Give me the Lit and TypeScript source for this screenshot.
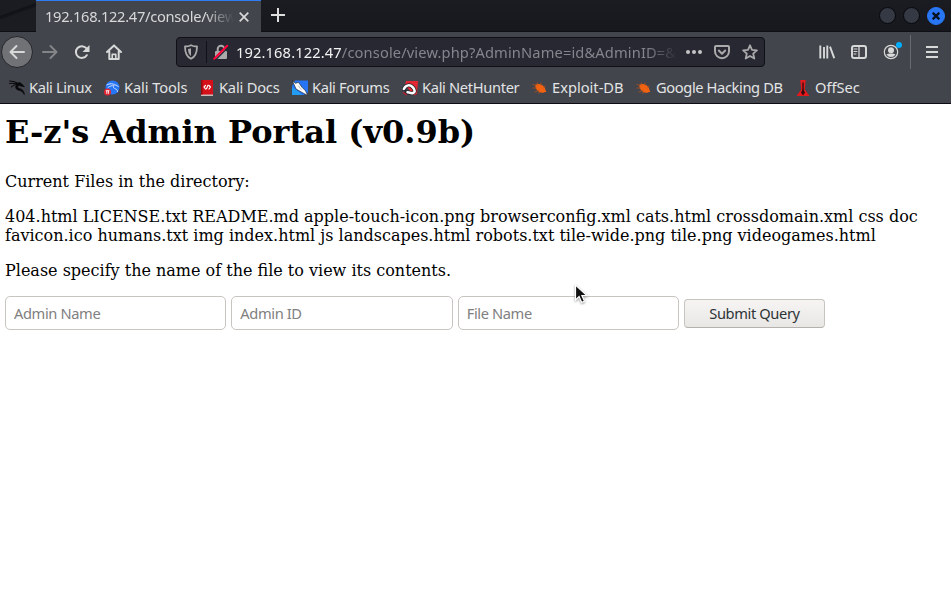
import { LitElement, html, css, svg, TemplateResult } from "lit";
import { customElement } from "lit/decorators.js";

const icon = (body: TemplateResult, size = 16) =>
  html`<svg width=${size} height=${size} viewBox="0 0 16 16" fill="none" stroke="currentColor" stroke-width="2" stroke-linecap="round" stroke-linejoin="round">${body}</svg>`;

const back = svg`<path d="M15 8H2M7.5 2L1.5 8l6 6"/>`;
const forward = svg`<path d="M1 8h13M8.5 2l6 6-6 6"/>`;
const reload = svg`<path d="M12.8 11.2A5.9 5.9 0 1 1 12.3 4.2"/><path d="M15.500 1v7H8.500z" fill="currentColor" stroke="none"/>`;
const home = svg`<path d="M1 8l7-6.6L15 8M3.3 7.5V15h9.4V7.5"/><path d="M6.2 15v-4.6h3.6V15" stroke-width="1.6"/>`;
const shield = svg`<path d="M8 1.2c1.8.9 3.8 1.3 6 1.3 0 6-1 10-6 12.3C3 12.500 2 8.500 2 2.500c2.200 0 4.200-.4 6-1.300z" stroke-width="1.800"/><path d="M8 4.200c-1 .4-2 .6-3 .7.100 3.300.9 5.500 3 7z" fill="currentColor" stroke="none"/>`;
const lock = svg`<path d="M4.700 7V5a3.300 3.300 0 0 1 6.600 0v2"/><rect x="2" y="7" width="12" height="8" rx="1" fill="currentColor" stroke="none"/><path d="M2.500 16L15.500 3" stroke="#272832" stroke-width="1.200"/><path d="M1.200 14.700L14.200 1.700" stroke="#ff0039" stroke-width="2"/>`;
const pocket = svg`<path d="M2 2h12a1 1 0 0 1 1 1v4.200a7 7 0 0 1-14 0V3a1 1 0 0 1 1-1z"/><path d="M4.800 6.500L8 9.700l3.200-3.200"/>`;
const star = svg`<path d="M8 1.300l2 4.500 4.900.5-3.700 3.300 1.100 4.900L8 12l-4.300 2.500 1.100-4.900L1.100 6.300 6 5.800z" stroke-width="1.800"/>`;
const library = svg`<path d="M1.300 1.500v13M5 3v11.500M8.300 1.500v13M11 2.700l4.200 11.500" stroke-width="1.900" stroke-linecap="butt"/>`;
const sidebar = svg`<rect x="1" y="2" width="14" height="12" rx="2"/><path d="M8 2v12" stroke-width="1.300"/><path d="M3 5h3M3 7.500h3M3 10h2" stroke-width="1"/>`;
const account = svg`<circle cx="8" cy="8" r="6.700" stroke-width="1.200"/><circle cx="8" cy="6.200" r="3" fill="currentColor" stroke="none"/><path d="M3.500 10.500c2.200-1.300 6.800-1.300 9 0A5.300 5.300 0 0 1 8 13a5.300 5.300 0 0 1-4.500-2.500z" fill="currentColor" stroke="none"/>`;
const menu = svg`<path d="M2 3h12M2 8h12M2 13h12" stroke-linecap="butt"/>`;

const dragon = svg`<path d="M.6 1c2.500 0 5.500.6 7.500 2M.8 3.600c2.500-.8 5-.2 7 .6M2.500 7c1.500-1.800 3.500-2.500 5.500-2.500" stroke="#08090b" stroke-width="1.100"/><path d="M7.500 3.500l3-1 1.500.8 3.300 3.300-2.300-.3-3-.8c-2 .8-1.800 2.300.3 2.900 3.300.9 4.700 2.600 5 6.100-1.300-2.500-2.600-3.600-5.200-4.200C6.500 9.500 5.800 7 7.500 5z" fill="#08090b" stroke="#08090b" stroke-width=".7"/>`;
const tools = svg`<circle cx="8.500" cy="7.500" r="7" fill="#2675f5" stroke="none"/><path d="M3 4.800c3-1.700 6-1.300 8 .2 1.500 0 2.500.6 3.300 1.600M4 7.500c2-1.800 4.300-2 6-1.700-1.500 2 .3 2.700 2 3.200 1 .6 1.500 1.700 1.500 2.500" stroke="#cfe0ff" stroke-width="1"/><circle cx="3.500" cy="12" r="3.500" fill="#e02534" stroke="none"/><path d="M1.800 10.700h3.600M2.800 11v2.800M4.400 11v2.800" stroke="#fff" stroke-width=".9" stroke-linecap="butt"/>`;
const docs = svg`<path d="M2 0h12v16H2z" fill="#d5101b" stroke="none"/><path d="M2 14.500h12V16H2z" fill="#c9bcbc" stroke="none"/><path d="M2 0h1.500v14.500H2z" fill="#99060e" stroke="none"/><path d="M6.500 5.500L5 7l1.500 2M10 5.500L11.500 7 10 9M9 5.300L7.500 8.700" stroke="#fff" stroke-width="1.200"/>`;
const forums = svg`<path d="M3 0.500h13v12L12 15H0V6z" fill="#2675f5" stroke="none"/><path d="M0 7l7 5 3 3H0z" fill="#239cf3" stroke="none"/><path d="M.3.8l3.200 2.500 3-1 3.500 5 3.500 3.500L15.800 15.500 11 13 4 9 2.500 5.500z" fill="#fff" stroke="#252a35" stroke-width=".7"/><path d="M6.500 6l3 4" stroke="#9aa4b4" stroke-width=".7"/>`;
const nethunter = svg`<path d="M4 1h12l-1 13-3 1.500L3 5z" fill="#e42732" stroke="none"/><path d="M1.800 9C4 4.500 8 4.500 10.500 7s3 5 .5 6-4-1-6.500-.6" stroke="#20232b" stroke-width="4"/><path d="M1.800 9C4 4.500 8 4.500 10.500 7s3 5 .5 6-4-1.300-5.500-.8" stroke="#fff" stroke-width="2.500"/><path d="M1.500 12.700l2.500 2" stroke="#b52131" stroke-width="1.500"/>`;
const bug = svg`<path d="M3.500 4.500c2.500-1 5-.5 6.500.6 2 1.200 3.300 3.200 3.500 5 .2.800.4 1.300 1 2-1 0-1.700 0-2.500.3C9 13.500 6.300 11.700 5 10 3.700 8.300 3 6.500 3.500 4.500z" fill="#f26311" stroke="none"/><path d="M4 5.500L1 4.500M4.500 8L1 8M6.500 10.500L3 12M8.500 12l-2 1.200M6 5L5.300 3M9 5.500V3M11.500 8l1.700-2" stroke="#b94e1c" stroke-width=".8"/>`;
const offsec = svg`<path d="M5.300 0h5.400l-.9 9.500L14.500 16h-13l4.700-6.500z" fill="#e5191b" stroke="none"/><path d="M8 3v7" stroke="#520c10" stroke-width="1.600"/><path d="M8 9l2 3.500-2 3-2-3z" fill="#300c0e" stroke="none"/>`;

const bookmarks: { label: string; art: TemplateResult; cls: string }[] = [
  { label: "Kali Linux", art: dragon, cls: "b1" },
  { label: "Kali Tools", art: tools, cls: "b2" },
  { label: "Kali Docs", art: docs, cls: "b3" },
  { label: "Kali Forums", art: forums, cls: "b4" },
  { label: "Kali NetHunter", art: nethunter, cls: "b5" },
  { label: "Exploit-DB", art: bug, cls: "b6" },
  { label: "Google Hacking DB", art: bug, cls: "b7" },
  { label: "OffSec", art: offsec, cls: "b8" },
];

@customElement("browser-chrome")
export class BrowserChrome extends LitElement {
  static styles = css`
    :host { display: block; height: 104px; box-sizing: border-box; background: #42454c; border-bottom: 1px solid #0c0c12; color: #d7d8d8; font: 14.67px/20px "Noto Sans", sans-serif; }
    svg { display: block; flex: none; }
    .tabs { height: 32px; box-sizing: border-box; display: flex; background: linear-gradient(#1b1c22, #17181e); border-bottom: 1px solid #0e0f14; }
    .lead { width: 36px; background: linear-gradient(160deg, #1b1c22 35%, #111217 37%, #15161b 44%, #1b1c22 46%); }
    .tab { width: 225px; height: 32px; box-sizing: border-box; border-top: 1px solid #2f7df6; background: #42454c; display: flex; align-items: center; padding-left: 9px; }
    .title { width: 189px; margin-top: -2px; overflow: hidden; white-space: nowrap; letter-spacing: -.28px; mask-image: linear-gradient(90deg, #000 160px, transparent 189px); }
    .close { margin-left: 5px; }
    .plus { margin: 8px 0 0 10px; }
    .window { margin: 7px 6px 0 auto; display: flex; gap: 7px; }
    .dot { width: 17px; height: 17px; box-sizing: border-box; border-radius: 50%; background: #343944; border: 1px solid #07080c; }
    .quit { background: #2876f4; border-color: #2876f4; color: #071020; display: grid; place-items: center; width: 18px; height: 18px; }
    .nav { height: 40px; display: flex; align-items: center; }
    .back { width: 32px; height: 32px; box-sizing: border-box; margin-left: 1px; border-radius: 50%; background: #717276; border: 1px solid #24262b; display: grid; place-items: center; }
    .fwd { color: #838589; margin-left: 9px; }
    .gap { margin-left: 16px; }
    .url { width: 589px; height: 30px; box-sizing: border-box; margin-left: 54px; border: 1px solid #0e1015; border-radius: 4px; background: #272832; display: flex; align-items: center; padding-left: 6px; color: #aaa; }
    .rule { width: 1px; height: 22px; background: #101118; margin: 0 6px 0 7px; }
    .address { width: 440px; margin-left: 7px; flex: none; overflow: hidden; white-space: nowrap; color: #85868c; letter-spacing: .13px; mask-image: linear-gradient(90deg, #000 410px, transparent 442px); }
    .host { color: #f2f2f3; }
    .dots { margin-left: 5px; }
    .pk { margin-left: 7px; }
    .st { margin-left: 12px; }
    .lib { margin-left: 54px; }
    .account { position: relative; margin-left: 16px; }
    .badge { position: absolute; right: -3px; top: -2px; width: 6px; height: 6px; border-radius: 50%; background: #00aeff; }
    .sep { width: 1px; height: 34px; background: #686b70; margin: 0 13px 0 11px; }
    .marks { height: 31px; display: flex; align-items: center; padding-left: 9px; color: #e3e4e5; }
    .mark { display: flex; align-items: center; gap: 4px; white-space: nowrap; flex: none; }
    .mark span { margin-top: -2px; }
    .b1 { width: 95px; letter-spacing: -.33px; }
    .b2 { width: 95px; letter-spacing: -.1px; }
    .b3 { width: 93px; letter-spacing: -.2px; }
    .b4 { width: 110px; letter-spacing: -.33px; }
    .b5 { width: 130px; letter-spacing: -.33px; }
    .b6 { width: 104px; }
    .b7 { width: 159px; letter-spacing: -.38px; }
  `;
  render() {
    return html`
      <div class="tabs">
        <div class="lead"></div>
        <div class="tab"><span class="title">192.168.122.47/console/view.</span>
          <svg class="close" width="10" height="10" viewBox="0 0 10 10" stroke="currentColor" stroke-width="1.700"><path d="M.7.700l8.600 8.600M9.300.700L.7 9.300"/></svg>
        </div>
        <svg class="plus" width="14" height="14" viewBox="0 0 14 14" stroke="#dedede" stroke-width="2"><path d="M7 0v14M0 7h14"/></svg>
        <div class="window"><span class="dot"></span><span class="dot"></span><span class="dot quit"><svg width="8" height="8" viewBox="0 0 8 8" stroke="currentColor" stroke-width="2.300"><path d="M.7.700l6.600 6.600M7.300.700L.7 7.300"/></svg></span></div>
      </div>
      <div class="nav">
        <div class="back">${icon(back)}</div>
        <div class="fwd">${icon(forward)}</div>
        <div class="gap">${icon(reload)}</div>
        <div class="gap">${icon(home)}</div>
        <div class="url">${icon(shield)}<i class="rule"></i>${icon(lock)}<span class="address"><span class="host">192.168.122.47</span>/console/view.php?AdminName=id&amp;AdminID=&amp;</span>
          <svg class="dots" width="26" height="16" viewBox="0 0 26 16" fill="#c5c5c7"><circle cx="7" cy="8" r="2"/><circle cx="13" cy="8" r="2"/><circle cx="19" cy="8" r="2"/></svg>
          <span class="pk">${icon(pocket)}</span><span class="st">${icon(star)}</span>
        </div>
        <div class="lib">${icon(library)}</div>
        <div class="gap">${icon(sidebar)}</div>
        <div class="account">${icon(account)}<i class="badge"></i></div>
        <i class="sep"></i>${icon(menu)}
      </div>
      <div class="marks">${bookmarks.map((b) => html`<div class="mark ${b.cls}">${icon(b.art)}<span>${b.label}</span></div>`)}</div>`;
  }
}

@customElement("admin-portal")
export class AdminPortal extends LitElement {
  static styles = css`
    :host { display: block; padding: 10px 5px 0; color: #000; font: 16px/19px "DejaVu Serif", serif; }
    h1 { margin: 0 0 21px; font-size: 32px; line-height: 37px; }
    p { margin: 0 0 16px; }
    form { display: flex; align-items: center; gap: 5px; }
    input, button { box-sizing: border-box; margin: 0; border: 1px solid #c8c4bf; border-radius: 5px; font: 14.67px "Noto Sans", sans-serif; letter-spacing: -.38px; outline: none; }
    input { width: 221.330px; height: 34px; padding: 1px 8px; background: #fff; }
    input::placeholder { color: #808080; opacity: 1; }
    button { width: 141px; height: 29px; margin-top: 1px; padding: 0 0 2px; border-radius: 4px; border-bottom-color: #b5b1ac; color: #2e3436; background: linear-gradient(#f6f5f4, #e8e7e5); }
  `;
  render() {
    return html`
      <h1>E-z's Admin Portal (v0.9b)</h1>
      <p>Current Files in the directory:</p>
      <p>404.html LICENSE.txt README.md apple-touch-icon.png browserconfig.xml cats.html crossdomain.xml css doc favicon.ico humans.txt img index.html js landscapes.html robots.txt tile-wide.png tile.png videogames.html</p>
      <p>Please specify the name of the file to view its contents.</p>
      <form>
        <input placeholder="Admin Name"><input placeholder="Admin ID"><input placeholder="File Name"><button type="button">Submit Query</button>
      </form>`;
  }
}

@customElement("app-root")
export class AppRoot extends LitElement {
  static styles = css`
    :host { display: block; position: relative; width: 951px; height: 607px; overflow: hidden; background: #fff; }
    .pointer { position: absolute; left: 574px; top: 284px; filter: drop-shadow(0 1px 1px #0006); }
  `;
  render() {
    return html`<browser-chrome></browser-chrome><admin-portal></admin-portal>
      <svg class="pointer" width="14" height="20" viewBox="0 0 14 20"><path d="M1.500 1v15l3.600-3.400 2.600 5.800 2.800-1.200-2.600-5.600h5z" fill="#111" stroke="#fff" stroke-width="1.200"/></svg>`;
  }
}
